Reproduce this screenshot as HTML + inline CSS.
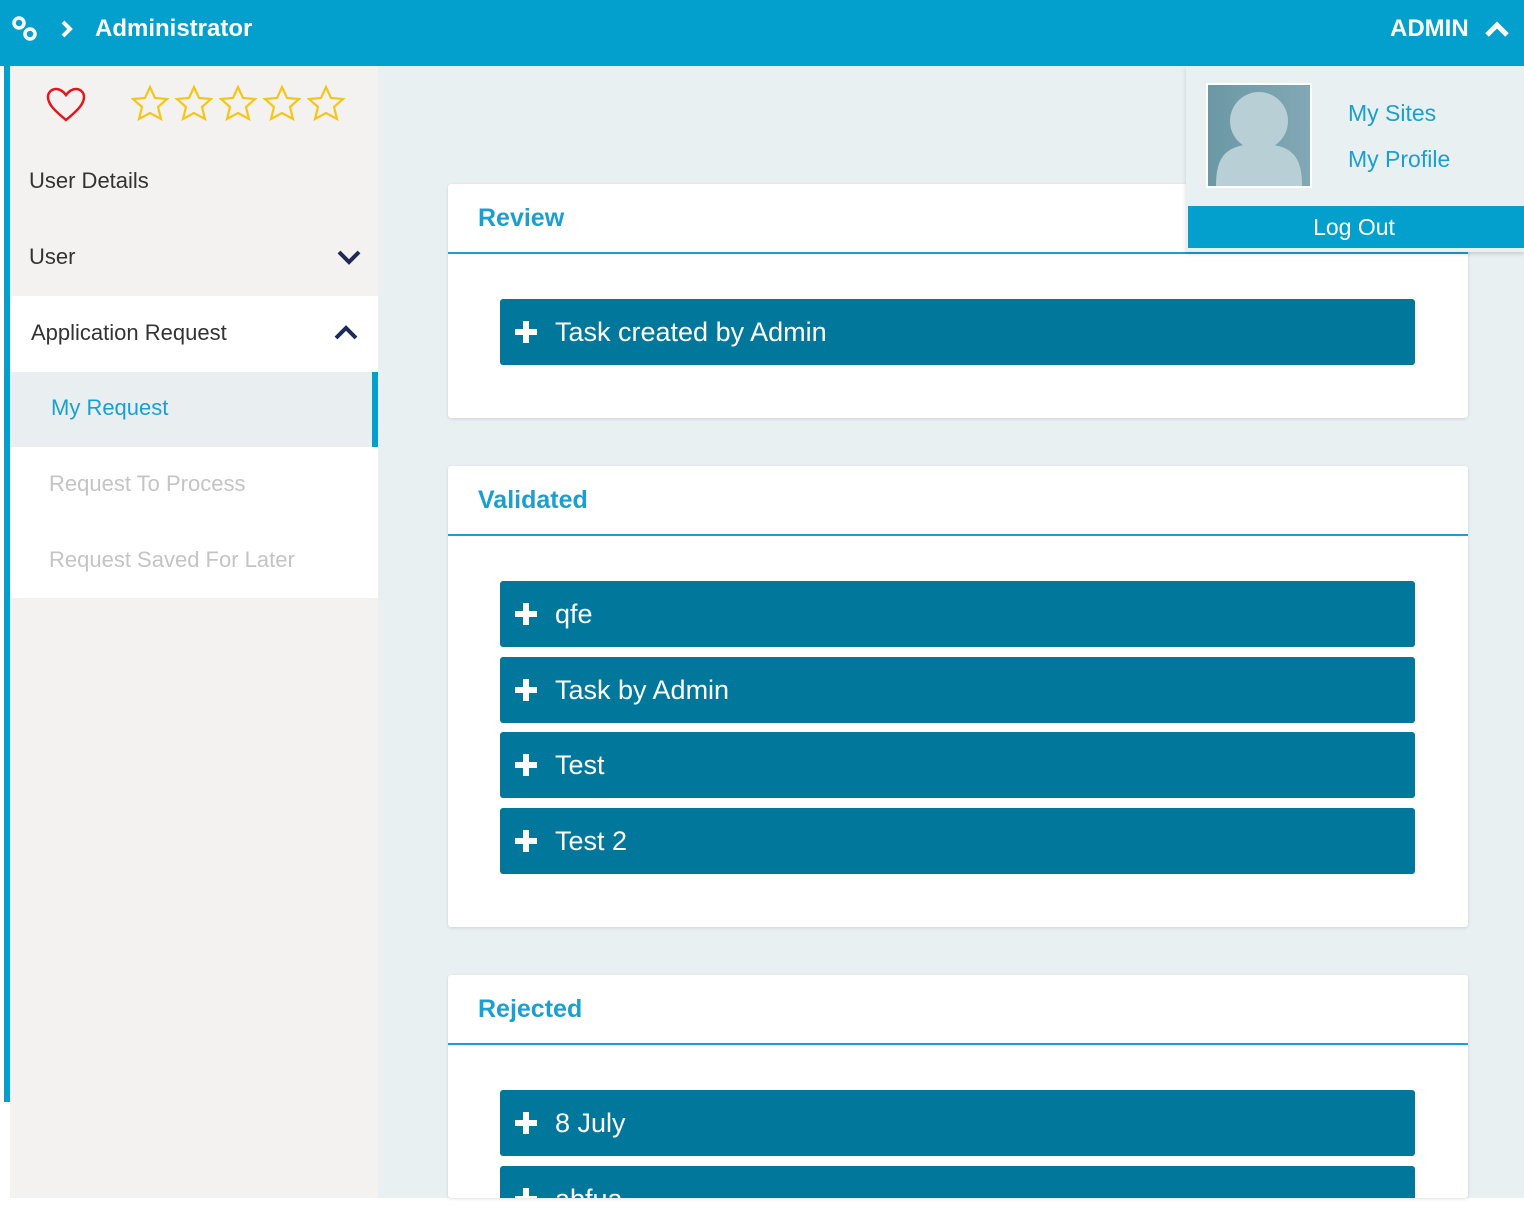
<!DOCTYPE html>
<html><head><style>
*{margin:0;padding:0;box-sizing:border-box}
body{width:1524px;height:1208px;background:#fff;font-family:"Liberation Sans",sans-serif;position:relative;overflow:hidden}
.a{position:absolute}
.top{left:0;top:0;width:1524px;height:66px;background:#03a0cd;color:#fff}
.side{left:10px;top:66px;width:368px;height:1132px;background:#f3f2f1}
.main{left:378px;top:66px;width:1146px;height:1132px;background:#e9f0f2}
.card{left:448px;width:1020px;background:#fff;box-shadow:0 1px 3px rgba(0,0,0,.12);border-radius:3px}
.card h2{position:absolute;left:30px;top:20px;font-size:25px;color:#1a9fd0;font-weight:bold}
.card .ln{position:absolute;left:0;right:0;top:68px;height:2px;background:#1a9fd0}
.btn{left:500px;width:915px;height:66px;background:#02779c;border-radius:3px;color:#fff;font-size:27px;line-height:66px;padding-left:55px;overflow:hidden}
.btn:before{content:"";position:absolute;left:15px;top:22px;width:22px;height:22px;background:linear-gradient(#fff,#fff) center/22px 6px no-repeat,linear-gradient(#fff,#fff) center/6px 22px no-repeat}
.si{left:10px;width:368px;font-size:22px;color:#333}
</style></head><body>
<div class="a top">
<svg class="a" style="left:10px;top:14px" width="30" height="30" viewBox="0 0 30 30" fill="none" stroke="#fff" stroke-width="3.5"><circle cx="9" cy="9" r="5"/><circle cx="20" cy="20" r="5"/></svg>
<svg class="a" style="left:60px;top:20px" width="14" height="18" viewBox="0 0 14 18" fill="none" stroke="#fff" stroke-width="4"><path d="M3 2l7 7-7 7"/></svg>
<div class="a" style="left:95px;top:15px;font-size:24px;font-weight:bold">Administrator</div>
<div class="a" style="left:1390px;top:15px;font-size:24px;font-weight:bold">ADMIN</div>
<svg class="a" style="left:1484px;top:20px" width="26" height="18" viewBox="0 0 26 18" fill="none" stroke="#fff" stroke-width="5"><path d="M3 15l10-10 10 10"/></svg>
</div>
<div class="a" style="left:4px;top:66px;width:6px;height:1036px;background:#03a0cd"></div>
<div class="a side"></div>
<div class="a main"></div>
<svg class="a" style="left:44px;top:86px" width="44" height="38" viewBox="0 0 44 38"><path d="M22 34C10 24 4 18 4 11 4 6 8 3 12 3c4 0 7 2 10 6 3-4 6-6 10-6 4 0 8 3 8 8 0 7-6 13-18 23z" fill="none" stroke="#e8141c" stroke-width="2.5"/></svg>
<svg class="a" style="left:130px;top:84px" width="220" height="40" viewBox="0 0 220 40"><g fill="none" stroke="#f5c518" stroke-width="2.2">
<path id="s" d="M20 3l5 11 12 1-9 8 3 12-11-6-11 6 3-12-9-8 12-1z"/>
<use href="#s" x="44"/><use href="#s" x="88"/><use href="#s" x="132"/><use href="#s" x="176"/></g></svg>
<div class="a si" style="top:168px;padding-left:19px">User Details</div>
<div class="a si" style="top:244px;padding-left:19px">User</div>
<svg class="a" style="left:336px;top:248px" width="26" height="18" viewBox="0 0 26 18" fill="none" stroke="#1d2a57" stroke-width="4"><path d="M3 4l10 10 10-10"/></svg>
<div class="a si" style="top:296px;height:76px;background:#fff;padding:24px 0 0 21px">Application Request</div>
<svg class="a" style="left:333px;top:324px" width="26" height="18" viewBox="0 0 26 18" fill="none" stroke="#1d2a57" stroke-width="4"><path d="M3 14l10-10 10 10"/></svg>
<div class="a si" style="top:372px;height:75px;background:#e9eef1;padding:23px 0 0 41px;color:#1a9fd0">My Request</div>
<div class="a" style="left:372px;top:372px;width:6px;height:75px;background:#03a0cd"></div>
<div class="a si" style="top:447px;height:151px;background:#fff"></div>
<div class="a si" style="top:471px;padding-left:39px;color:#c4c4c4">Request To Process</div>
<div class="a si" style="top:547px;padding-left:39px;color:#c4c4c4">Request Saved For Later</div>

<div class="a card" style="top:184px;height:234px"><h2>Review</h2><div class="ln"></div></div>
<div class="a btn" style="top:299px">Task created by Admin</div>
<div class="a card" style="top:466px;height:461px"><h2>Validated</h2><div class="ln"></div></div>
<div class="a btn" style="top:581px">qfe</div>
<div class="a btn" style="top:657px">Task by Admin</div>
<div class="a btn" style="top:732px">Test</div>
<div class="a btn" style="top:808px">Test 2</div>
<div class="a card" style="top:975px;height:223px"><h2>Rejected</h2><div class="ln"></div></div>
<div class="a btn" style="top:1090px">8 July</div>
<div class="a btn" style="top:1166px;height:32px;border-radius:3px 3px 0 0">abfua</div>

<div class="a" style="left:1186px;top:66px;width:338px;height:186px;background:#e9f0f2;box-shadow:0 2px 4px rgba(0,0,0,.15)"></div>
<div class="a" style="left:1206px;top:83px;width:106px;height:105px;background:#fff;padding:2px">
<svg width="102" height="101" viewBox="0 0 102 101"><defs><linearGradient id="g" x1="0" x2="1"><stop offset="0" stop-color="#6b98a6"/><stop offset="1" stop-color="#82a8b4"/></linearGradient></defs><rect width="102" height="101" fill="url(#g)"/><circle cx="51" cy="36" r="29" fill="#b9cfd6"/><path d="M8 101c0-30 10-42 43-42s43 12 43 42z" fill="#b9cfd6"/></svg></div>
<div class="a" style="left:1348px;top:100px;font-size:23px;color:#1a9fd0">My Sites</div>
<div class="a" style="left:1348px;top:146px;font-size:23px;color:#1a9fd0">My Profile</div>
<div class="a" style="left:1188px;top:206px;width:336px;height:42px;background:#03a0cd;color:#fff;font-size:23px;text-align:center;line-height:42px;padding-right:4px">Log Out</div>
</body></html>
